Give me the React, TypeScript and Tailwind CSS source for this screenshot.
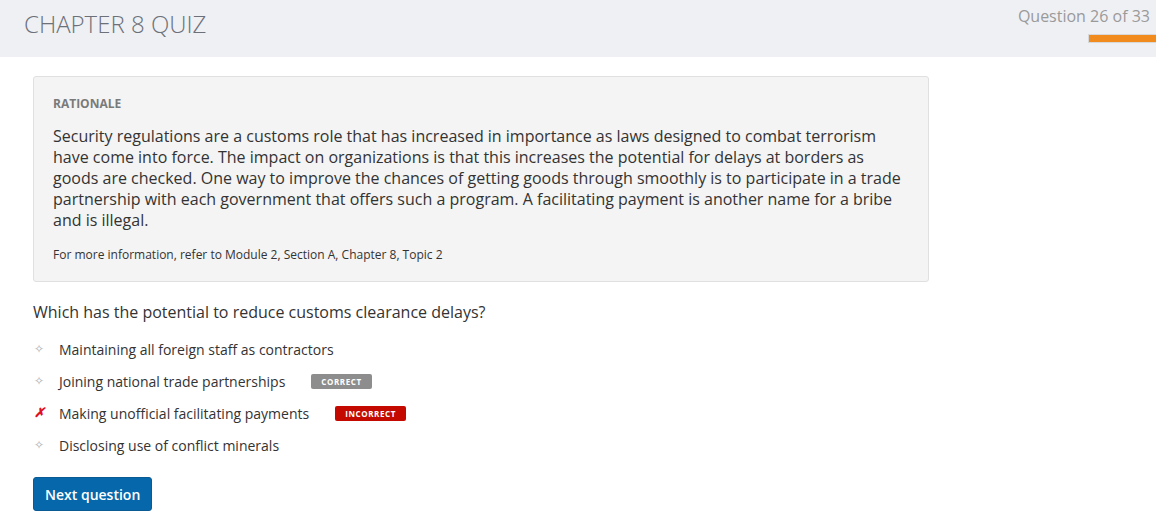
const options = [
  { text: 'Maintaining all foreign staff as contractors' },
  { text: 'Joining national trade partnerships', badge: 'CORRECT' },
  { text: 'Making unofficial facilitating payments', badge: 'INCORRECT', wrong: true },
  { text: 'Disclosing use of conflict minerals' },
];

export default function App() {
  return (
    <div className="min-h-[525px] bg-white text-[#333] [font-family:'Open_Sans',sans-serif]">
      <header className="flex h-[57px] items-start justify-between bg-[#eff0f4] pl-6">
        <h1 className="mt-[8px] text-[24px] font-light leading-[32px] text-[#6c7079]">CHAPTER 8 QUIZ</h1>
        <div className="flex flex-col items-end">
          <p className="mt-[5px] pr-[6px] text-[16px] leading-[22px] text-[#9a9a9a]">Question 26 of 33</p>
          <div className="mt-[7px] h-[9px] w-[68px] border border-r-0 border-[#d8d8d8] bg-[#f28b1e]" />
        </div>
      </header>

      <main className="px-[33px] pt-[19px]">
        <section className="w-[896px] rounded-[3px] border border-[#e0e0e0] bg-[#f4f4f4] px-[19px] pb-[18px] pt-[19px]">
          <h2 className="text-[12px] font-bold leading-[16px] text-[#7a7a7a]">RATIONALE</h2>
          <p className="mt-[14px] text-[16px] leading-[21px] text-[#333]">
            Security regulations are a customs role that has increased in importance as laws designed to combat terrorism
            have come into force. The impact on organizations is that this increases the potential for delays at borders as
            goods are checked. One way to improve the chances of getting goods through smoothly is to participate in a trade
            partnership with each government that offers such a program. A facilitating payment is another name for a bribe
            and is illegal.
          </p>
          <p className="mt-[16px] text-[12px] leading-[16px] text-[#333]">
            For more information, refer to Module 2, Section A, Chapter 8, Topic 2
          </p>
        </section>

        <p className="mt-[19px] text-[16px] leading-[22px] text-[#333]">Which has the potential to reduce customs clearance delays?</p>

        <ul className="mt-[16px] flex flex-col gap-[12px]">
          {options.map((o) => (
            <li key={o.text} className="flex h-[20px] items-center text-[14px] text-[#333]">
              <span className="flex w-[26px] justify-start">
                {o.wrong ? (
                  <span className="ml-[1px] text-[13px] font-bold italic text-[#e0101e]">✗</span>
                ) : (
                  <span className="ml-[1px] text-[12px] leading-none text-[#b4b4b4]">✧</span>
                )}
              </span>
              <span>{o.text}</span>
              {o.badge && (
                <span
                  className={
                    o.badge === 'CORRECT'
                      ? 'ml-[26px] rounded-[2px] bg-[#8d8d8d] px-[10px] text-[8px] font-bold leading-[15px] tracking-[0.6px] text-white'
                      : 'ml-[26px] rounded-[2px] bg-[#c40a00] px-[10px] text-[8px] font-bold leading-[15px] tracking-[0.6px] text-white'
                  }
                >
                  {o.badge}
                </span>
              )}
            </li>
          ))}
        </ul>

        <button className="mt-[22px] h-[34px] rounded-[3px] border border-[#0a5a93] bg-[#0667ab] px-[11px] text-[14px] font-semibold text-white">
          Next question
        </button>
      </main>
    </div>
  );
}
